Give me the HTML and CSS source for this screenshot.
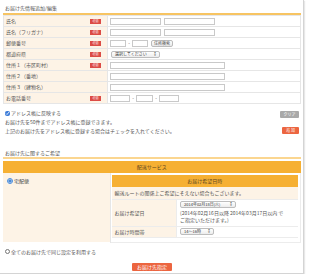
FILE: index.html
```html
<!DOCTYPE html>
<html lang="ja">
<head>
	<meta charset="UTF-8">
	<title>お届け先情報追加/編集</title>
	<link rel="stylesheet" href="styles.css">
</head>
<body>
<div class="page">
	<h2 class="heading">お届け先情報追加/編集</h2>
	<table class="form">
		<tr>
			<th><div class="lbl">氏名<span class="req">必須</span></div></th>
			<td><input class="w51"><input class="w51 gap3"></td>
		</tr>
		<tr>
			<th><div class="lbl">氏名（フリガナ）<span class="req">必須</span></div></th>
			<td><input class="w51"><input class="w51 gap3"></td>
		</tr>
		<tr>
			<th><div class="lbl">郵便番号<span class="req">必須</span></div></th>
			<td><input class="w16"><span class="dash">-</span><input class="w16"><button class="btn-small">住所検索</button></td>
		</tr>
		<tr>
			<th><div class="lbl">都道府県<span class="req">必須</span></div></th>
			<td><span class="select w49">選択してください <i>↕</i></span></td>
		</tr>
		<tr>
			<th><div class="lbl">住所１（市区町村）<span class="req">必須</span></div></th>
			<td><input class="w115"></td>
		</tr>
		<tr>
			<th><div class="lbl">住所２（番地）</div></th>
			<td><input class="w115"></td>
		</tr>
		<tr>
			<th><div class="lbl">住所３（建物名）</div></th>
			<td><input class="w115"></td>
		</tr>
		<tr>
			<th><div class="lbl">お電話番号<span class="req">必須</span></div></th>
			<td><input class="w20"><span class="dash">-</span><input class="w17"><span class="dash">-</span><input class="w20"></td>
		</tr>
	</table>

	<div class="reflect">
		<div class="reflect-text">
			<p><input type="checkbox" class="check" checked>アドレス帳に反映する</p>
			<p>お届け先を50件までアドレス帳に登録できます。</p>
			<p>上記のお届け先をアドレス帳に登録する場合はチェックを入れてください。</p>
		</div>
		<div class="reflect-buttons">
			<button class="btn-gray">クリア</button>
			<button class="btn-red">追 加</button>
		</div>
	</div>

	<h2 class="heading heading-light">お届け先に関するご希望</h2>
	<table class="delivery">
		<colgroup><col class="col-service"><col></colgroup>
		<tr class="row-bar"><th colspan="2" class="bar">配送サービス</th></tr>
		<tr class="row-body">
			<td class="service"><input type="radio" class="radio" checked>宅配便</td>
			<td class="detail">
				<table class="inner">
					<colgroup><col class="col-label"><col></colgroup>
					<tr class="row-ibar"><th colspan="2" class="bar">お届け希望日時</th></tr>
					<tr class="row-note"><td colspan="2" class="note">輸送ルートの関係上ご希望にそえない場合もございます。</td></tr>
					<tr class="row-date">
						<th>お届け希望日</th>
						<td>
							<span class="select w56">2014年02月18日(火) <i>↕</i></span>
							<p>(2014年02月16日以降 2014年03月17日以内 で<br>ご指定いただけます。)</p>
						</td>
					</tr>
					<tr class="row-time">
						<th>お届け時間帯</th>
						<td><span class="select w34">14〜16時 <i>↕</i></span></td>
					</tr>
				</table>
			</td>
		</tr>
	</table>

	<p class="same"><input type="checkbox" class="check">全てのお届け先で同じ設定を利用する</p>

	<div class="submit">
		<button class="btn-red btn-wide">お届け先指定</button>
	</div>
</div>
</body>
</html>
```

FILE: styles.css
```css
body {
	margin: 0;
	background: #fff;
	font: normal 5px/6px "Noto Sans CJK JP", "Liberation Sans", sans-serif;
	color: #555;
}

.page {
	box-sizing: border-box;
	width: 304px;
	height: 274px;
	padding: 0 0 0 3px;
	border-right: 1px solid #d4d4d4;
	border-bottom: 1px solid #d4d4d4;
	box-shadow: 1px 1px 1px #e8e8e8;
	overflow: hidden;
}

p {
	margin: 0;
}

.heading {
	box-sizing: border-box;
	height: 15px;
	margin: 0;
	width: 298px;
	padding: 5px 0 0 2px;
	font-size: 5px;
	line-height: 6px;
	font-weight: normal;
	color: #555;
	border-bottom: 2px solid #f7c462;
}

.heading-light {
	margin-top: 10px;
	height: 14px;
	border-bottom-color: #fbd690;
}

/* address form */
.form {
	width: 298px;
	border-collapse: collapse;
	table-layout: fixed;
}

.form tr {
	height: 11px;
}

.form th, .form td {
	padding: 0;
	border: 1px solid #e6e6e6;
	font-weight: normal;
	text-align: left;
	vertical-align: middle;
	line-height: 6px;
}

.form th {
	width: 103px;
	background: #fdf3e6;
	color: #555;
}

.form td {
	padding-left: 2px;
	background: #fff;
}

.lbl {
	display: flex;
	align-items: center;
	justify-content: space-between;
	padding: 0 6px 0 2px;
}

.req {
	display: inline-block;
	width: 11px;
	height: 5px;
	background: #dc4b45;
	color: #fff;
	font-size: 3px;
	line-height: 5px;
	text-align: center;
}

input {
	box-sizing: border-box;
	height: 7px;
	margin: 0;
	padding: 0;
	border: 1px solid #c9c9c9;
	vertical-align: middle;
	font-size: 5px;
}

.w51 { width: 51px; }
.w16 { width: 16px; }
.w17 { width: 17px; }
.w20 { width: 20px; }
.w115 { width: 115px; }
.gap3 { margin-left: 3px; }

.dash {
	display: inline-block;
	width: 6px;
	text-align: center;
	vertical-align: middle;
}

.btn-small {
	height: 7px;
	margin-left: 3px;
	padding: 0 2px;
	border: 1px solid #bbb;
	border-radius: 2px;
	background: linear-gradient(#fff, #e8e8e8);
	font: 4px/5px "Noto Sans CJK JP", sans-serif;
	color: #444;
	vertical-align: middle;
}

.select {
	display: inline-flex;
	justify-content: space-between;
	align-items: center;
	box-sizing: border-box;
	height: 7px;
	padding: 0 2px 0 3px;
	border: 1px solid #bdbdbd;
	border-radius: 2px;
	background: linear-gradient(#fff, #ececec);
	font-size: 4px;
	line-height: 5px;
	color: #333;
	vertical-align: middle;
}

.select i {
	font-style: normal;
	font-size: 4px;
}

.w49 { width: 49px; margin-left: 1px; }
.w56 { width: 56px; }
.w34 { width: 34px; }

/* address book */
.reflect {
	display: flex;
	justify-content: space-between;
	width: 298px;
	height: 31px;
	padding-top: 4px;
	box-sizing: border-box;
}

.reflect-text p {
	height: 9px;
	line-height: 9px;
	padding-left: 2px;
}

.check {
	width: 5px;
	height: 5px;
	margin: 0 1px 0 0;
	vertical-align: -0.5px;
	accent-color: #3b7bd8;
}

.radio {
	width: 6px;
	height: 6px;
	margin: 0 1px 0 0;
	vertical-align: -1px;
	accent-color: #4a8ad8;
}

.reflect-buttons {
	display: flex;
	flex-direction: column;
	align-items: flex-end;
	gap: 9px;
	padding: 3px 2px 0 0;
}

button {
	margin: 0;
	cursor: pointer;
}

.btn-gray, .btn-red {
	height: 7px;
	padding: 0;
	border: 0;
	border-radius: 1px;
	color: #fff;
	font: 4px/7px "Noto Sans CJK JP", sans-serif;
}

.btn-gray {
	width: 19px;
	background: #a9a9a9;
}

.btn-red {
	width: 17px;
	background: #ec6540;
}

/* delivery */
.delivery {
	width: 298px;
	margin-top: 2px;
	border-collapse: collapse;
	table-layout: fixed;
}

.col-service {
	width: 107px;
}

.row-bar {
	height: 12px;
}

.row-body {
	height: 69px;
}

.bar {
	padding: 0;
	background: #f6b033;
	color: #5b4420;
	font-weight: normal;
	text-align: center;
	vertical-align: middle;
	line-height: 6px;
}

.service {
	padding: 5px 0 0 4px;
	background: #fdf3e6;
	vertical-align: top;
	border-right: 1px solid #e6e6e6;
	color: #444;
}

.detail {
	padding: 2px 2px 0 1px;
	vertical-align: top;
	border-right: 1px solid #ececec;
	border-bottom: 1px solid #ececec;
}

.inner {
	width: 100%;
	border-collapse: collapse;
	table-layout: fixed;
}

.col-label {
	width: 65px;
}

.inner th, .inner td {
	padding: 0 0 0 3px;
	font-weight: normal;
	text-align: left;
	line-height: 6px;
	border-bottom: 1px solid #ececec;
}

.inner .bar {
	padding: 0;
	text-align: center;
	border: 0;
}

.row-ibar { height: 12px; }
.row-note { height: 12px; }
.row-date { height: 27px; }
.row-time { height: 11px; }

.note {
	background: #fdf3e6;
	color: #555;
	vertical-align: middle;
}

.row-date th, .row-time th {
	background: #fdf3e6;
	color: #555;
	border-right: 1px solid #ececec;
}

.row-date th {
	vertical-align: middle;
}

.row-date td {
	vertical-align: top;
	padding-top: 1px;
}

.row-date td p {
	margin-top: 1px;
	line-height: 7px;
}

.row-time th, .row-time td {
	vertical-align: middle;
}

.same {
	margin-top: 6px;
	height: 6px;
	line-height: 6px;
	padding-left: 2px;
}

.submit {
	width: 298px;
	text-align: center;
	padding-top: 8px;
	line-height: 0;
}

.btn-wide {
	width: 40px;
	height: 8px;
	line-height: 8px;
	font-size: 5px;
}
```
